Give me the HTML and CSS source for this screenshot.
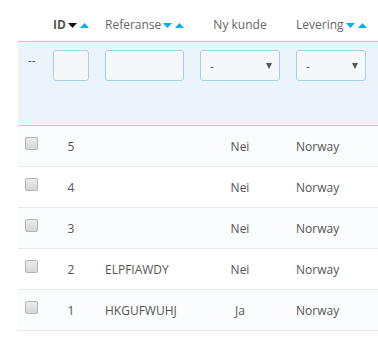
FILE: index.html
```html
<!DOCTYPE html>
<html>
<head>
    <title>Ordrer</title>
    <link rel="stylesheet" href="styles.css">
</head>
<body>
    <table class="list">
        <colgroup>
            <col class="c-check">
            <col class="c-id">
            <col class="c-ref">
            <col class="c-new">
            <col class="c-country">
        </colgroup>
        <thead>
            <tr class="heading">
                <th></th>
                <th class="strong">ID <span class="sort"><svg width="9" height="5"><polygon points="0,0 9,0 4.5,5" fill="#111"/></svg><svg width="9" height="5"><polygon points="0,5 9,5 4.5,0" fill="#00aff0"/></svg></span></th>
                <th>Referanse <span class="sort"><svg width="9" height="5"><polygon points="0,0 9,0 4.5,5" fill="#00aff0"/></svg><svg width="9" height="5"><polygon points="0,5 9,5 4.5,0" fill="#00aff0"/></svg></span></th>
                <th class="center">Ny kunde</th>
                <th>Levering <span class="sort"><svg width="9" height="5"><polygon points="0,0 9,0 4.5,5" fill="#00aff0"/></svg><svg width="9" height="5"><polygon points="0,5 9,5 4.5,0" fill="#00aff0"/></svg></span></th>
            </tr>
            <tr class="filter">
                <th class="dash">--</th>
                <th><input type="text" class="box small"></th>
                <th><input type="text" class="box wide"></th>
                <th><div class="pick"><select class="box"><option>-</option></select></div></th>
                <th><div class="pick short"><select class="box"><option>-</option></select></div></th>
            </tr>
        </thead>
        <tbody>
            <tr>
                <td class="check"><input type="checkbox"></td>
                <td class="num">5</td>
                <td></td>
                <td class="center">Nei</td>
                <td>Norway</td>
            </tr>
            <tr>
                <td class="check"><input type="checkbox"></td>
                <td class="num">4</td>
                <td></td>
                <td class="center">Nei</td>
                <td>Norway</td>
            </tr>
            <tr>
                <td class="check"><input type="checkbox"></td>
                <td class="num">3</td>
                <td></td>
                <td class="center">Nei</td>
                <td>Norway</td>
            </tr>
            <tr>
                <td class="check"><input type="checkbox"></td>
                <td class="num">2</td>
                <td>ELPFIAWDY</td>
                <td class="center">Nei</td>
                <td>Norway</td>
            </tr>
            <tr>
                <td class="check"><input type="checkbox"></td>
                <td class="num">1</td>
                <td>HKGUFWUHJ</td>
                <td class="center">Ja</td>
                <td>Norway</td>
            </tr>
        </tbody>
    </table>
</body>
</html>
```

FILE: styles.css
```css
body {
    margin: 0;
    background: #fff;
    font-family: "Open Sans", "Liberation Sans", sans-serif;
    font-size: 12px;
    color: #555;
}
.list {
    margin-left: 18px;
    width: 360px;
    border-collapse: collapse;
    table-layout: fixed;
}
.c-check { width: 35px; }
.c-id { width: 52px; }
.c-ref { width: 95px; }
.c-new { width: 96px; }
.c-country { width: 82px; }

th, td {
    padding: 0;
    text-align: left;
    font-weight: normal;
    white-space: nowrap;
}
.center { text-align: center; padding-right: 16px; }

/* overskrift */
.heading th {
    height: 33px;
    padding-top: 8px;
    vertical-align: middle;
    color: #666;
    background: #fff;
}
.heading th.strong { font-weight: bold; color: #555; }
.sort { display: inline-block; vertical-align: middle; margin-top: -3px; margin-left: -1px; }
.sort svg { display: inline-block; vertical-align: middle; margin-right: 3px; }

/* filterrad */
.filter th {
    height: 73px;
    padding-top: 8px;
    vertical-align: top;
    background: #ecf4fb;
    border-top: 1px solid #a6d3ec;
    border-bottom: 1px solid #a6d3ec;
}
.filter th.dash { padding-left: 10px; padding-top: 10px; color: #555; }
.box {
    box-sizing: border-box;
    height: 31px;
    border: 1px solid #a2d2ee;
    border-radius: 3px;
    background: #f4f8f9;
    font-family: inherit;
    font-size: 12px;
    color: #555;
    margin: 0;
}
.small { width: 36px; }
.wide { width: 79px; }
.pick { position: relative; width: 80px; }
.pick.short { width: 70px; }
.pick select {
    width: 100%;
    -webkit-appearance: none;
    appearance: none;
    padding: 0 0 0 9px;
    padding-top: 2px;
}
.pick::after {
    content: "";
    position: absolute;
    right: 8px;
    top: 13px;
    border-left: 3px solid transparent;
    border-right: 3px solid transparent;
    border-top: 6px solid #555;
    pointer-events: none;
}

/* rader */
tbody td {
    height: 40px;
    border-bottom: 1px solid #e6e9ec;
    vertical-align: middle;
}
tbody tr:nth-child(odd) td { background: #fbfcfd; }
td.num { text-align: center; padding-right: 16px; }
td.check { vertical-align: top; padding-left: 7px; padding-top: 0; }
td.check input {
    -webkit-appearance: none;
    appearance: none;
    display: block;
    width: 13px;
    height: 13px;
    margin: 11px 0 0 0;
    border: 1px solid #b3b3b3;
    border-radius: 2px;
    background: linear-gradient(#ececec, #d6d6d6);
    box-sizing: border-box;
}
```
